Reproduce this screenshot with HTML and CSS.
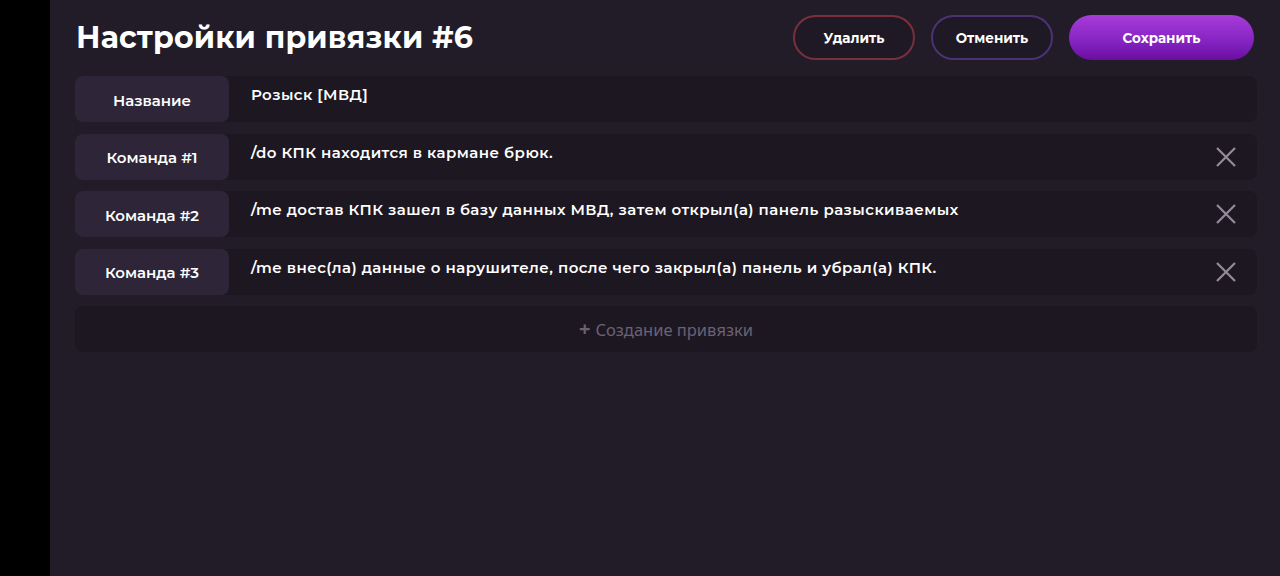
FILE: index.html
```html
<!DOCTYPE html>
<html lang="ru">
<head>
<meta charset="utf-8">
<link rel="stylesheet" href="styles.css">
</head>
<body>
<div class="app">
  <aside class="strip"></aside>
  <main class="panel">
    <header class="head">
      <h1 class="title">Настройки привязки #6</h1>
      <div class="actions">
        <button class="btn btn-del">Удалить</button>
        <button class="btn btn-cancel">Отменить</button>
        <button class="btn btn-save">Сохранить</button>
      </div>
    </header>
    <section class="rows">
      <div class="row">
        <div class="label">Название</div>
        <div class="value">Розыск [МВД]</div>
      </div>
      <div class="row">
        <div class="label">Команда #1</div>
        <div class="value">/do КПК находится в кармане брюк.</div>
        <span class="close"><svg width="22" height="22" viewBox="0 0 22 22"><path d="M2 2L20 20M20 2L2 20" stroke="#948c9c" stroke-width="2.2" fill="none"/></svg></span>
      </div>
      <div class="row">
        <div class="label">Команда #2</div>
        <div class="value">/me достав КПК зашел в базу данных МВД, затем открыл(а) панель разыскиваемых</div>
        <span class="close"><svg width="22" height="22" viewBox="0 0 22 22"><path d="M2 2L20 20M20 2L2 20" stroke="#948c9c" stroke-width="2.2" fill="none"/></svg></span>
      </div>
      <div class="row">
        <div class="label">Команда #3</div>
        <div class="value">/me внес(ла) данные о нарушителе, после чего закрыл(а) панель и убрал(а) КПК.</div>
        <span class="close"><svg width="22" height="22" viewBox="0 0 22 22"><path d="M2 2L20 20M20 2L2 20" stroke="#948c9c" stroke-width="2.2" fill="none"/></svg></span>
      </div>
      <div class="add"><span class="plus">+</span> Создание привязки</div>
    </section>
  </main>
</div>
</body>
</html>
```

FILE: styles.css
```css
* { box-sizing: border-box; }
html, body { margin: 0; padding: 0; }
body {
  width: 1280px;
  height: 576px;
  overflow: hidden;
  background: #221c29;
  font-family: "Montserrat", "Noto Sans", "DejaVu Sans", sans-serif;
  color: #fff;
}
.app { display: flex; height: 576px; }
.strip { width: 50px; background: #000; flex: none; }
.panel { flex: 1; padding: 15px 23px 0 25px; display: flex; flex-direction: column; }
.head { display: flex; align-items: center; justify-content: space-between; height: 45px; padding-left: 1px; }
.title {
  margin: 0;
  font-family: "Montserrat", "Noto Sans", sans-serif;
  font-weight: 700;
  font-size: 30px;
  letter-spacing: 0.15px;
  color: #fff;
}
.actions { display: flex; gap: 16px; padding-right: 3px; }
.btn {
  height: 45px;
  border-radius: 23px;
  font-family: "Montserrat", "Noto Sans", sans-serif;
  font-weight: 700;
  font-size: 13.5px;
  color: #fff;
  background: #1f1925;
  cursor: pointer;
}
.btn-del { width: 122px; border: 2px solid #7a2f3b; }
.btn-cancel { width: 122px; border: 2px solid #4c3274; }
.btn-save { width: 185px; border: none; background: linear-gradient(180deg, #a83cd9 0%, #8423c2 60%, #6a0e9e 100%); }
.rows { display: flex; flex-direction: column; gap: 11.5px; margin-top: 16px; }
.row {
  display: flex;
  align-items: stretch;
  height: 46px;
  background: #1d1722;
  border-radius: 8px;
}
.label {
  width: 154px;
  flex: none;
  background: #2e2638;
  border-radius: 8px;
  display: flex;
  align-items: center;
  justify-content: center;
  font-weight: 600;
  font-size: 15px;
  padding-top: 2px;
}
.value {
  flex: 1;
  padding: 9px 0 0 22px;
  font-weight: 600;
  font-size: 15px;
  letter-spacing: 0.45px;
  white-space: nowrap;
}
.close {
  width: 60px;
  display: flex;
  align-items: center;
  justify-content: center;
  padding-right: 2px;
}
.add {
  height: 46px;
  background: #1d1722;
  border-radius: 8px;
  display: flex;
  align-items: center;
  justify-content: center;
  gap: 5px;
  color: #6a6272;
  font-size: 16.5px;
  font-family: "Noto Sans", sans-serif;
}
.plus { font-size: 20px; font-weight: 700; line-height: 1; }
```
